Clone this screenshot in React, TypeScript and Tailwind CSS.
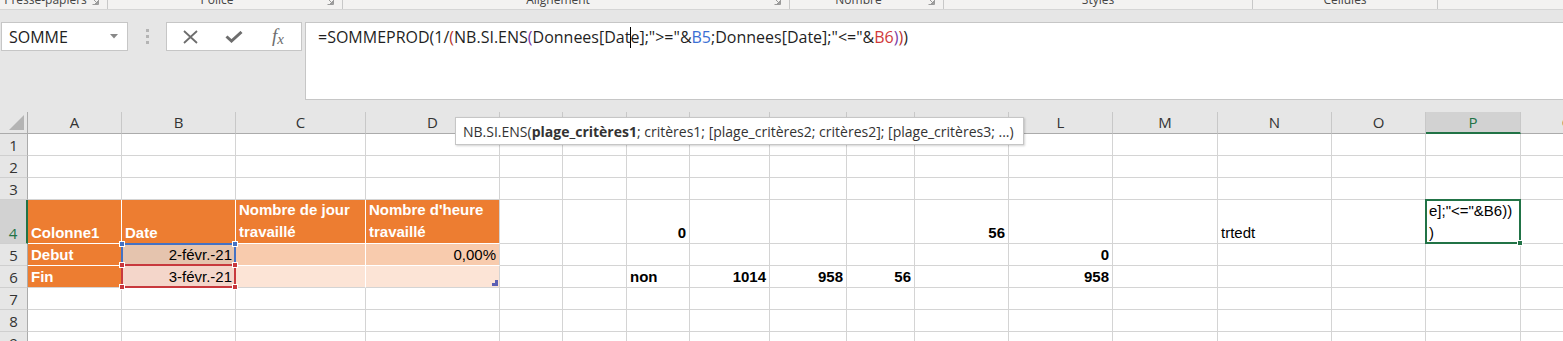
import React from 'react';

const COLS = ['A', 'B', 'C', 'D', 'E', 'F', 'G', 'H', 'I', 'J', 'K', 'L', 'M', 'N', 'O', 'P', 'Q'];
const ROWS = [1, 2, 3, 4, 5, 6, 7, 8, 9];
// letters under the function tooltip are not visible
const HIDDEN_HEADERS = ['E', 'F', 'G', 'H', 'I', 'J', 'K'];

type CellDef = {
  text?: string;
  bold?: boolean;
  right?: boolean;
  white?: boolean;
  fill?: string;
  multi?: boolean;
  top?: boolean;
};

const ORANGE = 'bg-[#ed7d31]';

const CELLS: Record<string, CellDef> = {
  A4: { text: 'Colonne1', bold: true, white: true, fill: ORANGE },
  B4: { text: 'Date', bold: true, white: true, fill: ORANGE },
  C4: { text: 'Nombre de jour\ntravaillé', bold: true, white: true, fill: ORANGE, multi: true },
  D4: { text: "Nombre d'heure\ntravaillé", bold: true, white: true, fill: ORANGE, multi: true },
  G4: { text: '0', bold: true, right: true },
  K4: { text: '56', bold: true, right: true },
  N4: { text: 'trtedt' },
  P4: { text: 'e];"<="&B6))\n)', multi: true, top: true },
  A5: { text: 'Debut', bold: true, white: true, fill: ORANGE },
  B5: { text: '2-févr.-21', right: true, fill: 'bg-[#e5c4ae]' },
  C5: { fill: 'bg-[#f8cbad]' },
  D5: { text: '0,00%', right: true, fill: 'bg-[#f8cbad]' },
  L5: { text: '0', bold: true, right: true },
  A6: { text: 'Fin', bold: true, white: true, fill: ORANGE },
  B6: { text: '3-févr.-21', right: true, fill: 'bg-[#f4d6ca]' },
  C6: { fill: 'bg-[#fce4d6]' },
  D6: { fill: 'bg-[#fce4d6]' },
  G6: { text: 'non', bold: true },
  H6: { text: '1014', bold: true, right: true },
  I6: { text: '958', bold: true, right: true },
  J6: { text: '56', bold: true, right: true },
  L6: { text: '958', bold: true, right: true },
};

const GROUPS = [
  { label: 'Presse-papiers', w: 'w-[108px]', launcher: true },
  { label: 'Police', w: 'w-[235px]', launcher: true },
  { label: 'Alignement', w: 'w-[447px]', launcher: true },
  { label: 'Nombre', w: 'w-[154px]', launcher: true },
  { label: 'Styles', w: 'w-[309px]', launcher: false },
  { label: 'Cellules', w: 'w-[185px]', launcher: false },
];

function RibbonLabels() {
  return (
    <div className="flex h-[10px] overflow-hidden border-b border-[#d5d5d5] bg-[#f3f2f1]">
      {GROUPS.map((g) => (
        <div key={g.label} className={`${g.w} flex h-full border-r border-[#c8c8c8]`}>
          <div className="-mt-[6px] flex-1 text-center text-[12px] leading-[12px] text-[#444]">{g.label}</div>
          {g.launcher && (
            <div className="w-[16px] -mt-[3px]">
              <svg width="8" height="8" viewBox="0 0 8 8" className="text-[#9a9a9a]">
                <path d="M0.5 0.5H6.5M7.5 1.5V7.5H1.5" stroke="currentColor" fill="none" />
                <path d="M3 3L6.5 6.5M4 6.5H6.5V4" stroke="currentColor" fill="none" />
              </svg>
            </div>
          )}
        </div>
      ))}
    </div>
  );
}

function FormulaBar() {
  return (
    <div className="flex h-[102px] items-start pl-[1px] pt-[12px]">
      <div className="flex h-[29px] w-[127px] items-center border border-[#c6c6c6] bg-white pl-[7px] pr-[9px] text-[16px] text-[#222]">
        <span className="flex-1">SOMME</span>
        <svg width="8" height="5" viewBox="0 0 8 5">
          <path d="M0 0H8L4 4.5Z" fill="#888" />
        </svg>
      </div>
      <div className="flex h-[29px] w-[38px] flex-col items-center justify-center gap-[3px]">
        <div className="h-[3px] w-[3px] bg-[#b4b4b4]" />
        <div className="h-[3px] w-[3px] bg-[#b4b4b4]" />
        <div className="h-[3px] w-[3px] bg-[#b4b4b4]" />
      </div>
      <div className="flex h-[29px] w-[136px] items-center border border-[#c6c6c6] bg-white px-[1px] text-[#6d6d6d]">
        <div className="flex w-[44px] justify-center">
          <svg width="15" height="14" viewBox="0 0 15 14">
            <path d="M1 1L14 13M14 1L1 13" stroke="currentColor" strokeWidth="1.8" />
          </svg>
        </div>
        <div className="flex w-[44px] justify-center">
          <svg width="18" height="12" viewBox="0 0 18 12">
            <path d="M1.5 5.5L6.5 10L16.5 1" stroke="currentColor" strokeWidth="3" fill="none" />
          </svg>
        </div>
        <div className="w-[44px] text-center font-['Liberation_Serif',serif] text-[19px] italic leading-[20px]">
          f<span className="relative top-[2px] text-[15px]">x</span>
        </div>
      </div>
      <div className="ml-[3px] h-[78px] flex-1 border-y border-l border-[#c6c6c6] bg-white pl-[12px] pt-[4px] text-[16px] leading-[21px] whitespace-nowrap text-[#1f1f1f]">
        <span>=SOMMEPROD(1/</span>
        <span className="text-[#b8342c]">(</span>
        <span>NB.SI.ENS</span>
        <span className="text-[#7a3aa8]">(</span>
        <span>Donnees[Dat</span>
        <span className="-mx-[0.5px] inline-block h-[21px] w-px bg-black align-top" />
        <span>e];"&gt;="&amp;</span>
        <span className="text-[#3b6fd4]">B5</span>
        <span>;Donnees[Date];"&lt;="&amp;</span>
        <span className="text-[#d03a3a]">B6</span>
        <span className="text-[#7a3aa8]">)</span>
        <span className="text-[#b8342c]">)</span>
        <span>)</span>
      </div>
    </div>
  );
}

function Cell({ col, row }: { col: string; row: number }) {
  const key = `${col}${row}`;
  const def = CELLS[key] ?? {};
  const inTable = row >= 4 && row <= 6 && ['A', 'B', 'C', 'D'].includes(col);
  const rightGray = !inTable || col === 'D';
  const bottomGray = !inTable || row === 6;
  return (
    <div
      className={[
        'relative flex border-r border-b px-[3px] whitespace-pre',
        def.fill ?? 'bg-white',
        rightGray ? 'border-r-[#d4d4d4]' : 'border-r-white',
        bottomGray ? 'border-b-[#d4d4d4]' : 'border-b-white',
        def.top ? 'items-start' : 'items-end',
        def.right ? 'justify-end' : 'justify-start',
        def.bold ? 'font-bold' : 'font-normal',
        def.white ? 'text-white' : 'text-black',
        def.multi ? 'leading-[22px]' : 'leading-[20px]',
      ].join(' ')}
    >
      {def.text && <span>{def.text}</span>}
      {key === 'B5' && (
        <div className="absolute -top-[1px] -right-[1px] -bottom-[1px] -left-[1px] z-10 border-2 border-[#4472c4]">
          <div className="absolute -top-[4px] -left-[4px] h-[6px] w-[6px] border border-white bg-[#4472c4]" />
          <div className="absolute -top-[4px] -right-[4px] h-[6px] w-[6px] border border-white bg-[#4472c4]" />
        </div>
      )}
      {key === 'B6' && (
        <div className="absolute -top-[2px] -right-[1px] -bottom-[1px] -left-[1px] z-10 border-2 border-[#c8393d]">
          <div className="absolute -top-[4px] -left-[4px] h-[6px] w-[6px] border border-white bg-[#c8393d]" />
          <div className="absolute -top-[4px] -right-[4px] h-[6px] w-[6px] border border-white bg-[#c8393d]" />
          <div className="absolute -bottom-[4px] -left-[4px] h-[6px] w-[6px] border border-white bg-[#c8393d]" />
          <div className="absolute -bottom-[4px] -right-[4px] h-[6px] w-[6px] border border-white bg-[#c8393d]" />
        </div>
      )}
      {key === 'D6' && (
        <svg width="6" height="6" viewBox="0 0 6 6" className="absolute right-[1px] bottom-[1px]">
          <path d="M6 0V6H0V3H3V0Z" fill="#5b5fb4" />
        </svg>
      )}
      {key === 'P4' && (
        <div className="absolute -top-[1px] -right-[1px] -bottom-[1px] -left-[1px] z-10 border-2 border-[#217346]">
          <div className="absolute -right-[4px] -bottom-[4px] h-[6px] w-[6px] border border-white bg-[#217346]" />
        </div>
      )}
    </div>
  );
}

function Sheet() {
  return (
    <div className="grid grid-cols-[28px_94px_114px_130px_134px_63px_64px_63px_80px_77px_68px_94px_104px_105px_114px_94px_95px_94px] grid-rows-[22px_22px_22px_22px_44px_22px_22px_22px_22px_22px] font-['Liberation_Sans',Arial,sans-serif] text-[15px]">
      <div className="relative border-r border-b border-r-[#ababab] border-b-[#ababab] bg-[#e6e6e6]">
        <svg width="15" height="15" viewBox="0 0 15 15" className="absolute right-[3px] bottom-[3px]">
          <path d="M15 0V15H0Z" fill="#b4b4b4" />
        </svg>
      </div>
      {COLS.map((c) => (
        <div
          key={c}
          className={[
            "flex items-center justify-center border-r border-r-[#c8c8c8] font-['Open_Sans',sans-serif] text-[15px]",
            c === 'P'
              ? 'border-b-2 border-b-[#217346] bg-[#d2d2d2] text-[#217346]'
              : 'border-b border-b-[#ababab] bg-[#e6e6e6] text-[#333]',
          ].join(' ')}
        >
          {HIDDEN_HEADERS.includes(c) ? null : c}
        </div>
      ))}
      {ROWS.map((r) => (
        <React.Fragment key={r}>
          <div
            className={[
              "flex items-end justify-center border-b border-b-[#cfcfcf] font-['Open_Sans',sans-serif] text-[15px] leading-[20px]",
              r === 4
                ? 'border-r-2 border-r-[#217346] bg-[#d2d2d2] text-[#217346]'
                : 'border-r border-r-[#ababab] bg-[#e6e6e6] text-[#333]',
            ].join(' ')}
          >
            {r}
          </div>
          {COLS.map((c) => (
            <Cell key={c} col={c} row={r} />
          ))}
        </React.Fragment>
      ))}
    </div>
  );
}

function Tooltip() {
  return (
    <div className="absolute top-[117px] left-[455px] z-20 flex h-[28px] w-[569px] items-center border border-[#c6c6c6] bg-white pl-[7px] font-['Open_Sans',sans-serif] text-[14px] whitespace-nowrap text-[#333] shadow-[1px_1px_2px_rgba(0,0,0,0.18)]">
      NB.SI.ENS(<b>plage_critères1</b>; critères1; [plage_critères2; critères2]; [plage_critères3; ...)
    </div>
  );
}

export default function App() {
  return (
    <div className="relative h-[341px] w-[1563px] overflow-hidden bg-[#e6e6e6] font-['Open_Sans','Noto_Sans',sans-serif]">
      <RibbonLabels />
      <FormulaBar />
      <Sheet />
      <Tooltip />
    </div>
  );
}
